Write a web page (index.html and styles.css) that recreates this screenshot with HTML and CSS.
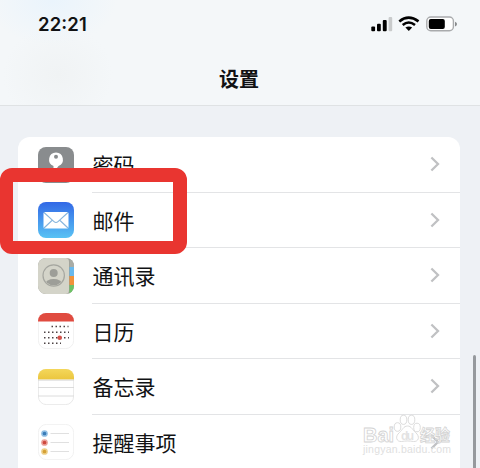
FILE: index.html
```html
<!DOCTYPE html>
<html lang="zh-CN">
<head>
<meta charset="utf-8">
<title>设置</title>
<link rel="stylesheet" href="styles.css">
</head>
<body>
<main class="screen">
  <header class="header">
    <div class="status">
      <span class="time">22:21</span>
      <svg class="status-icons" width="88" height="18" viewBox="0 0 88 18">
        <rect x="1.3" y="11.4" width="3.8" height="4.8" rx="1"/>
        <rect x="7" y="8.8" width="3.8" height="7.4" rx="1"/>
        <rect x="12.8" y="5" width="3.9" height="11.2" rx="1"/>
        <rect x="18.6" y="2" width="3.6" height="14.2" rx="1" fill="#c9cbcc"/>
        <g fill="none" stroke="#000" stroke-width="2.6">
          <path d="M29.3 6.4Q38.5-1.2 48.5 6.4"/>
          <path d="M32.7 10Q38.7 5 45 10"/>
        </g>
        <path d="M35.4 12.6Q38.8 10.2 42.2 12.6L38.8 16Z"/>
        <rect x="56.8" y="2" width="26.6" height="13.8" rx="4" fill="#fff" stroke="#a9abad" stroke-width="1.4"/>
        <rect x="58.8" y="4" width="16" height="10" rx="2"/>
        <path d="M85 6.8q2 .7 2 2.300t-2 2.300z" fill="#888b8d"/>
      </svg>
    </div>
    <h1 class="title">设置</h1>
  </header>

  <section class="list">
    <div class="row">
      <svg class="icon" viewBox="0 0 36 36">
        <rect width="36" height="36" rx="8" fill="#898c8e"/>
        <path d="M18 5.500a7 7 0 0 0-2.500 13.500V30l2.500 3 3-3-2-3 2-3-2-3 1.500-2A7 7 0 0 0 18 5.500Z" fill="#fff"/>
        <circle cx="18" cy="9.800" r="2" fill="#898c8e"/>
      </svg>
      <div class="cell"><span>密码</span><svg class="chevron" viewBox="0 0 10 16"><path d="M1.4 1.5 8 8l-6.600 6.500"/></svg></div>
    </div>
    <div class="row">
      <svg class="icon" viewBox="0 0 36 36">
        <defs><linearGradient id="mail" x2="0" y2="1"><stop stop-color="#3268e6"/><stop offset="1" stop-color="#59c2f4"/></linearGradient></defs>
        <rect width="36" height="36" rx="8" fill="url(#mail)"/>
        <rect x="5.500" y="10" width="25" height="16.500" rx="1.500" fill="#fff"/>
        <path d="M6 10.500 16 19.600q2 1.800 4 0L30 10.500M6 26l8.500-8M30 26l-8.500-8" fill="none" stroke="#86b5dd" stroke-width="1.100"/>
      </svg>
      <div class="cell"><span>邮件</span><svg class="chevron" viewBox="0 0 10 16"><path d="M1.4 1.5 8 8l-6.600 6.500"/></svg></div>
    </div>
    <div class="row">
      <svg class="icon" viewBox="0 0 36 36">
        <defs>
          <clipPath id="tile"><rect width="36" height="36" rx="8"/></clipPath>
          <clipPath id="face"><circle cx="15.700" cy="17.500" r="9.800"/></clipPath>
        </defs>
        <g clip-path="url(#tile)">
          <rect width="36" height="36" fill="#9b9c94"/>
          <rect x="31.500" width="5" height="9" fill="#a9aca5"/>
          <rect x="31.500" y="9" width="5" height="9" fill="#68b9ee"/>
          <rect x="31.500" y="18" width="5" height="9" fill="#f1923b"/>
          <rect x="31.500" y="27" width="5" height="9" fill="#6cc365"/>
          <path d="M0 0h28q3 0 3 4v28q0 4-3 4H0z" fill="#d4d4c9"/>
        </g>
        <g clip-path="url(#face)" fill="#9d9e98"><circle cx="15.700" cy="15" r="4"/><ellipse cx="15.700" cy="26" rx="8.500" ry="5"/></g>
        <circle cx="15.700" cy="17.500" r="10.700" fill="none" stroke="#a5a69f" stroke-width="1.200"/>
      </svg>
      <div class="cell"><span>通讯录</span><svg class="chevron" viewBox="0 0 10 16"><path d="M1.4 1.5 8 8l-6.600 6.500"/></svg></div>
    </div>
    <div class="row">
      <svg class="icon" viewBox="0 0 36 36">
        <rect x=".4" y=".4" width="35.200" height="35.200" rx="8" fill="#fff" stroke="#ececec" stroke-width=".8"/>
        <path d="M0 8.500V8a8 8 0 0 1 8-8h20a8 8 0 0 1 8 8v.5z" fill="#e04b40"/>
        <g fill="none" stroke="#4c4344" stroke-width="1.500" stroke-dasharray="1.500 2.500">
          <path d="M13.500 13.500H30.500"/><path d="M6 19.200H31"/><path d="M6 24.700H31"/><path d="M6 30.200H23"/>
        </g>
        <circle cx="21.700" cy="24.700" r="2.300" fill="#d4524b"/>
      </svg>
      <div class="cell"><span>日历</span><svg class="chevron" viewBox="0 0 10 16"><path d="M1.4 1.5 8 8l-6.600 6.500"/></svg></div>
    </div>
    <div class="row">
      <svg class="icon" viewBox="0 0 36 36">
        <defs><linearGradient id="note" x2="0" y2="1"><stop stop-color="#f4d75b"/><stop offset="1" stop-color="#ebc63e"/></linearGradient></defs>
        <rect x=".4" y=".4" width="35.200" height="35.200" rx="8" fill="#fff" stroke="#e3e3e3" stroke-width=".8"/>
        <path d="M0 10.500V8a8 8 0 0 1 8-8h20a8 8 0 0 1 8 8v2.500z" fill="url(#note)"/>
        <path d="M0 11.200H36M0 18.500H36M0 27H36" stroke="#d8d8d8" stroke-width=".9"/>
      </svg>
      <div class="cell"><span>备忘录</span><svg class="chevron" viewBox="0 0 10 16"><path d="M1.4 1.5 8 8l-6.600 6.500"/></svg></div>
    </div>
    <div class="row">
      <svg class="icon" viewBox="0 0 36 36">
        <rect x=".4" y=".4" width="35.200" height="35.200" rx="8" fill="#fff" stroke="#ededed" stroke-width=".8"/>
        <path d="M12.500 9.500H31M12.500 18.500H31M12.500 27.500H31" stroke="#dcdcdc" stroke-width=".9"/>
        <g stroke-width="1.500">
          <circle cx="6.500" cy="9.500" r="2.600" fill="#397cb8" stroke="#92bfe4"/>
          <circle cx="6.500" cy="18.500" r="2.600" fill="#cf493f" stroke="#eaa099"/>
          <circle cx="6.500" cy="27.500" r="2.600" fill="#d5a035" stroke="#edcf88"/>
        </g>
      </svg>
      <div class="cell"><span>提醒事项</span><svg class="chevron" viewBox="0 0 10 16"><path d="M1.4 1.5 8 8l-6.600 6.500"/></svg></div>
    </div>
  </section>

  <div class="highlight"></div>
  <div class="scrollbar"></div>
  <svg class="watermark" width="100" height="48" viewBox="0 0 100 48">
    <g class="mark">
      <text x="2" y="28.500" font-size="20" textLength="31" lengthAdjust="spacingAndGlyphs">Bai</text>
      <ellipse cx="36.500" cy="14" rx="3.300" ry="4.300"/>
      <ellipse cx="42.500" cy="6.800" rx="3.300" ry="4.600"/>
      <ellipse cx="50.500" cy="6.800" rx="3.300" ry="4.600"/>
      <ellipse cx="56" cy="14.500" rx="3.300" ry="4.300"/>
      <path d="M46.500 13c-4 0-5 4-8 6.500-5 4-3 9.500 2 9 4-.7 8-.7 12 0 5 .5 7-5 2-9-3-2.500-4-6.500-8-6.500z"/>
      <text class="inner" x="40" y="27" font-size="12" textLength="13">du</text>
      <text x="59" y="28" font-size="16" textLength="30" lengthAdjust="spacingAndGlyphs">经验</text>
    </g>
    <text class="site" x="2" y="40" textLength="88">jingyan.baidu.com</text>
  </svg>
</main>
</body>
</html>
```
FILE: styles.css
```css
* {
  box-sizing: border-box;
}

body {
  margin: 0;
}

.screen {
  position: relative;
  width: 480px;
  height: 468px;
  overflow: hidden;
  background: #eef1f5;
  color: #111214;
  font-family: "Noto Sans CJK SC", sans-serif;
}

.header {
  height: 106px;
  border-bottom: 1.5px solid #dfe2e4;
  background:
    radial-gradient(ellipse 65px 45px at 52px 0, #eaf4fc, transparent),
    radial-gradient(ellipse 55px 50px at 58px 75px, #f0f3f4, transparent),
    #f4f7f9;
}

.status {
  display: flex;
  justify-content: space-between;
  align-items: flex-start;
  height: 63px;
  padding: 15px 22px 0 38px;
}

.time {
  font: 600 18.500px/19px Inter, sans-serif;
  font-feature-settings: "case";
  letter-spacing: 0.1px;
}

.title {
  margin: 0;
  font-size: 20px;
  font-weight: 700;
  line-height: 31px;
  text-align: center;
  padding-right: 2px;
}

.list {
  margin: 31px 20px 0 18px;
  border-radius: 12px 12px 0 0;
  background: #fff;
}

.row {
  display: flex;
  align-items: center;
  height: 55.500px;
  padding-left: 20px;
}

.icon {
  flex: none;
  width: 36px;
  height: 36px;
}

.cell {
  display: flex;
  flex: 1;
  align-items: center;
  justify-content: space-between;
  height: 100%;
  margin-left: 18px;
  padding: 0 20px 0 0.600px;
  border-bottom: 1px solid #e3e4e6;
  font-size: 21px;
  line-height: 30px;
}

.row:last-child .cell {
  border-bottom-color: transparent;
}

.chevron {
  width: 10px;
  height: 16px;
  fill: none;
  stroke: #c0c1c3;
  stroke-width: 2.300;
}

.highlight {
  position: absolute;
  top: 168px;
  left: 0;
  width: 187px;
  height: 86px;
  border: solid #e93530;
  border-width: 14px 14px 13px 13px;
  border-radius: 12px;
}

.scrollbar {
  position: absolute;
  top: 355px;
  left: 473px;
  width: 3px;
  height: 125px;
  border-radius: 2px;
  background: #96999d;
}

.watermark {
  position: absolute;
  left: 361px;
  top: 413px;
  font-family: "Liberation Sans", "Noto Sans CJK SC", sans-serif;
  font-weight: 700;
}

.mark {
  fill: #fff;
  fill-opacity: 0.6;
  stroke: #d3d3d3;
  stroke-width: 0.8;
}

.inner {
  fill: #d0d0d0;
  stroke: none;
}

.site {
  fill: #e0e0e0;
  font-size: 10.500px;
  font-weight: 400;
}
```
